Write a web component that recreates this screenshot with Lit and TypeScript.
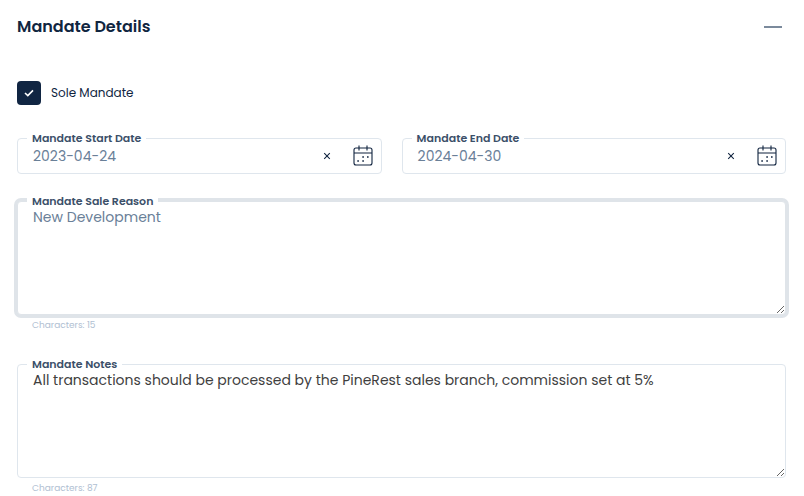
import { LitElement, html, css, svg } from "lit";
import { customElement, property } from "lit/decorators.js";
import { classMap } from "lit/directives/class-map.js";

const calendarIcon = html`<svg width="20" height="22" viewBox="0 0 20 22" fill="none">
  ${svg`<rect x="1" y="3" width="18" height="17" rx="2" stroke="#10233f" stroke-width="1.1"/>
  <path d="M1 8H19M6 .5V5.5M14 .5V5.5" stroke="#10233f" stroke-width="1.1"/>
  <path d="M9.3 12h1.6M14 12h1.6M4.3 16h1.6M9.3 16h1.6" stroke="#10233f" stroke-width="1.3"/>`}
</svg>`;

@customElement("date-field")
export class DateField extends LitElement {
  @property() label = "";
  @property() value = "";

  static styles = css`
    :host { display: block; position: relative; height: 36px; box-sizing: border-box;
      border: 1px solid #dfe6ed; border-radius: 4px; }
    .label { position: absolute; left: 9px; top: -9px; height: 17px; line-height: 17px; padding: 0 5px;
      background: #fff; color: #3c5069; font-weight: 600; font-size: 11px; white-space: nowrap; }
    .row { display: flex; align-items: center; height: 34px; padding: 0 8px 0 15px; }
    .value { flex: 1; color: #6a8098; font-size: 14px; line-height: 20px; }
    .clear { display: block; margin-right: 22px; }
    .row svg { flex: none; }
  `;

  render() {
    return html`<span class="label">${this.label}</span>
      <div class="row">
        <span class="value">${this.value}</span>
        <svg class="clear" width="8" height="8" viewBox="0 0 8 8">
          <path d="M1.2 1.2L6.8 6.8M6.8 1.2L1.2 6.8" stroke="#10233f" stroke-width="1.05" />
        </svg>
        ${calendarIcon}
      </div>`;
  }
}

@customElement("text-area-field")
export class TextAreaField extends LitElement {
  @property() label = "";
  @property() value = "";
  @property() count = "";
  @property({ type: Boolean }) active = false;

  static styles = css`
    :host { display: block; position: relative; }
    .label { position: absolute; left: 10px; top: -8px; height: 17px; line-height: 17px; padding: 0 5px;
      background: #fff; color: #3c5069; font-weight: 600; font-size: 11px; white-space: nowrap; }
    .area { display: block; box-sizing: border-box; width: 100%; height: 114px; margin: 0; padding: 5px 15px;
      border: 1px solid #dfe6ed; border-radius: 4px; outline: none; background: #fff; resize: vertical;
      font: inherit; font-size: 14px; line-height: 21px; color: #3f3f3f; }
    .active { border-color: #dfe4e9; box-shadow: 0 0 0 3px #dfe4e9; color: #6a8098; }
    .count { padding-left: 15px; margin-top: 3px; height: 14px; line-height: 14px; font-size: 9px; color: #b0c0d2; }
  `;

  render() {
    return html`<textarea class=${classMap({ area: true, active: this.active })} .value=${this.value} spellcheck="false"></textarea>
      <span class="label">${this.label}</span>
      <div class="count">Characters: ${this.count}</div>`;
  }
}

@customElement("app-root")
export class AppRoot extends LitElement {
  static styles = css`
    :host { display: block; box-sizing: border-box; height: 496px; overflow: hidden; background: #fff;
      padding: 14px 18px 0 17px; font-family: Poppins, Inter, sans-serif; color: #10253f; }
    .head { display: flex; align-items: center; justify-content: space-between; height: 26px; padding-right: 4px; }
    .title { margin: 0; font-size: 16px; font-weight: 600; line-height: 26px; }
    .collapse { width: 18px; height: 2px; background: #7b8a9c; }
    .check { display: flex; align-items: center; gap: 10px; margin-top: 41px; height: 24px; font-size: 12px; }
    .box { display: flex; align-items: center; justify-content: center; width: 24px; height: 24px;
      border-radius: 4px; background: #102542; }
    .dates { display: grid; grid-template-columns: 364.6px 384.4px; gap: 20px; margin: 33px 0 27px; }
    .notes { margin-top: 32px; }
  `;

  render() {
    return html`<div class="head"><h2 class="title">Mandate Details</h2><div class="collapse"></div></div>
      <div class="check">
        <span class="box"><svg width="10" height="8" viewBox="0 0 10 8" fill="none">
          <path d="M1 4L3.8 6.6L9 1.4" stroke="#fff" stroke-width="1.6" /></svg></span>
        <span class="check-label">Sole Mandate</span>
      </div>
      <div class="dates">
        <date-field label="Mandate Start Date" value="2023-04-24"></date-field>
        <date-field label="Mandate End Date" value="2024-04-30"></date-field>
      </div>
      <text-area-field active label="Mandate Sale Reason" value="New Development" count="15"></text-area-field>
      <text-area-field class="notes" label="Mandate Notes" count="87"
        value="All transactions should be processed by the PineRest sales branch, commission set at 5%"></text-area-field>`;
  }
}
